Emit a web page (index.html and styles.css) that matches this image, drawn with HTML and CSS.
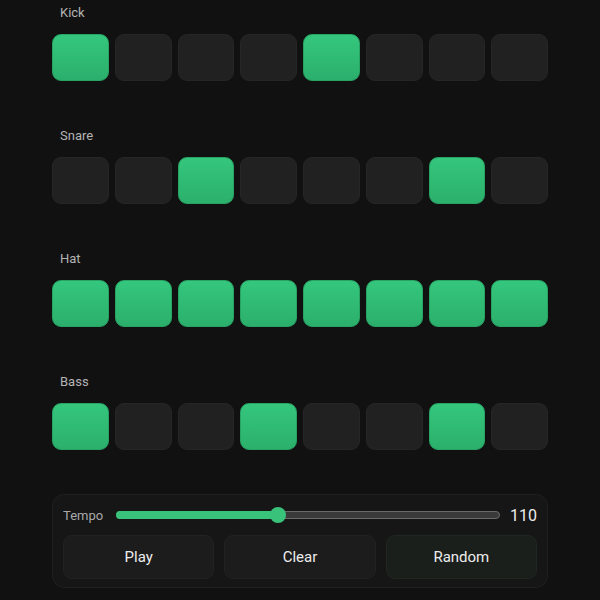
FILE: index.html
```html
<!DOCTYPE html>
<html>
<head>
<meta charset="utf-8">
<link rel="stylesheet" href="styles.css">
</head>
<body>
<div class="app">
  <div class="tracks">
    <div class="track">
      <div class="label">Kick</div>
      <div class="steps">
        <div class="cell on"></div><div class="cell"></div><div class="cell"></div><div class="cell"></div>
        <div class="cell on"></div><div class="cell"></div><div class="cell"></div><div class="cell"></div>
      </div>
    </div>
    <div class="track">
      <div class="label">Snare</div>
      <div class="steps">
        <div class="cell"></div><div class="cell"></div><div class="cell on"></div><div class="cell"></div>
        <div class="cell"></div><div class="cell"></div><div class="cell on"></div><div class="cell"></div>
      </div>
    </div>
    <div class="track">
      <div class="label">Hat</div>
      <div class="steps">
        <div class="cell on"></div><div class="cell on"></div><div class="cell on"></div><div class="cell on"></div>
        <div class="cell on"></div><div class="cell on"></div><div class="cell on"></div><div class="cell on"></div>
      </div>
    </div>
    <div class="track">
      <div class="label">Bass</div>
      <div class="steps">
        <div class="cell on"></div><div class="cell"></div><div class="cell"></div><div class="cell on"></div>
        <div class="cell"></div><div class="cell"></div><div class="cell on"></div><div class="cell"></div>
      </div>
    </div>
  </div>
  <div class="panel">
    <div class="tempo">
      <span class="tempo-label">Tempo</span>
      <div class="slider">
        <div class="fill" style="width: 42.2%"></div>
        <div class="thumb" style="left: 42.2%"></div>
      </div>
      <span class="tempo-value">110</span>
    </div>
    <div class="buttons">
      <button class="btn">Play</button>
      <button class="btn">Clear</button>
      <button class="btn alt">Random</button>
    </div>
  </div>
</div>
</body>
</html>
```

FILE: styles.css
```css
html, body {
  margin: 0;
  padding: 0;
  background: #111111;
}
body {
  font-family: Roboto, "Liberation Sans", sans-serif;
  color: #e6e6e6;
}
.app {
  width: 496px;
  margin: 0 0 0 52px;
  padding-top: 5px;
}
.tracks {
  display: flex;
  flex-direction: column;
  gap: 47px;
}
.track {
  display: flex;
  flex-direction: column;
  gap: 13px;
}
.label {
  font-size: 13px;
  line-height: 16px;
  color: #b4b4b4;
  padding-left: 8px;
}
.steps {
  display: grid;
  grid-template-columns: repeat(8, 1fr);
  gap: 6px;
}
.cell {
  height: 47px;
  box-sizing: border-box;
  border-radius: 9px;
  background: #212121;
  border: 1px solid #262626;
}
.cell.on {
  background: linear-gradient(180deg, #35c67d 0%, #2bb06c 100%);
  border: 1px solid #27a363;
}
.panel {
  margin-top: 44px;
  box-sizing: border-box;
  background: #161616;
  border: 1px solid #202020;
  border-radius: 12px;
  padding: 10px 10px 8px 10px;
}
.tempo {
  display: flex;
  align-items: center;
  height: 20px;
}
.tempo-label {
  font-size: 13px;
  color: #a8a8a8;
  width: 53px;
}
.slider {
  position: relative;
  width: 384px;
  height: 8px;
  box-sizing: border-box;
  border-radius: 4px;
  background: #3a3a3a;
  border: 1px solid #6a6a6a;
}
.fill {
  position: absolute;
  left: -1px;
  top: -1px;
  height: 8px;
  border-radius: 4px;
  background: #38c27a;
}
.thumb {
  position: absolute;
  top: 50%;
  width: 16px;
  height: 16px;
  margin-left: -8px;
  margin-top: -8px;
  border-radius: 50%;
  background: #38c27a;
}
.tempo-value {
  margin-left: auto;
  font-size: 16px;
  color: #ececec;
}
.buttons {
  margin-top: 10px;
  display: grid;
  grid-template-columns: repeat(3, 1fr);
  gap: 10px;
}
.btn {
  height: 44px;
  font-family: Roboto, "Liberation Sans", sans-serif;
  font-size: 15px;
  color: #ececec;
  background: #1c1c1c;
  border: 1px solid #222222;
  border-radius: 9px;
}
.btn.alt {
  background: #1a1f1c;
  border-color: #202621;
}
```
